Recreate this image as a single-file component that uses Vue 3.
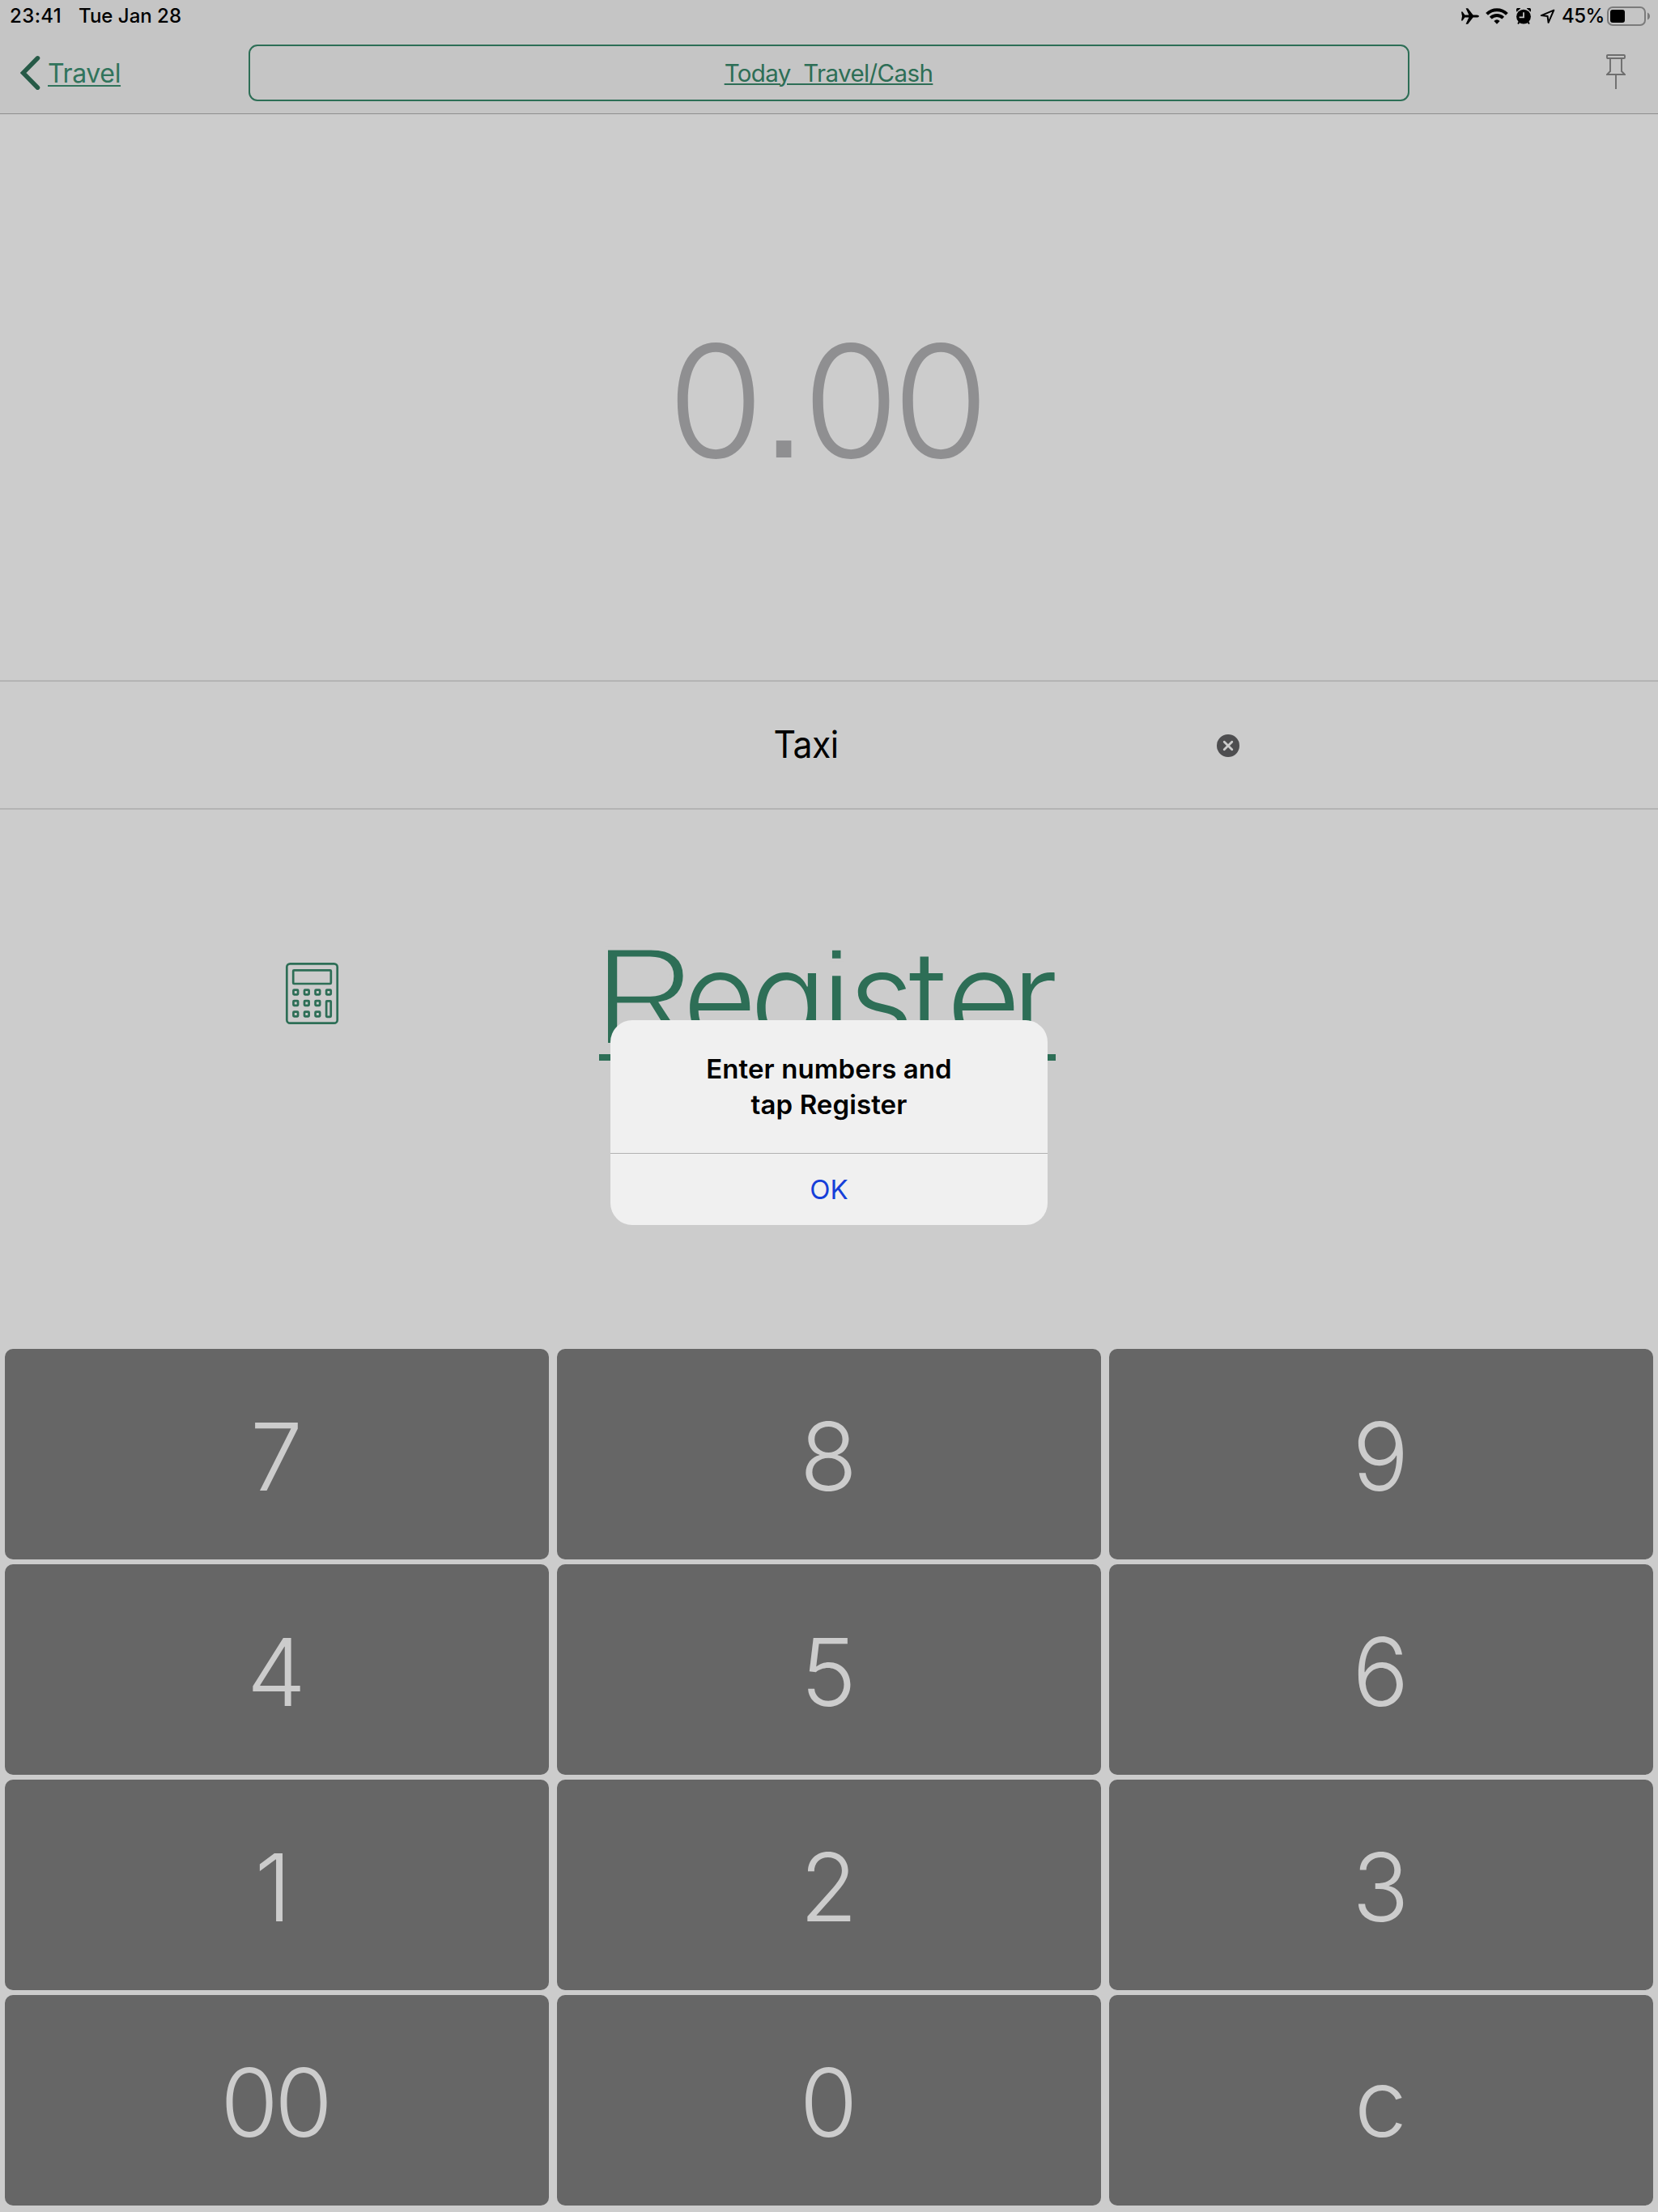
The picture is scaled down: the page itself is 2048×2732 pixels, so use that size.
<script setup>
const keys = ['7', '8', '9', '4', '5', '6', '1', '2', '3', '00', '0', 'c']
</script>

<template>
  <div class="screen">
    <header class="header">
      <div class="status">
        <span class="time">23:41</span>
        <span class="date">Tue Jan 28</span>
        <div class="indicators">
          <svg class="plane" width="22" height="20" viewBox="0 0 22 20">
            <path d="M0 4.6h1.6L4.4 8.4h5L5.6.3h2.6l6.4 8.1h4.6c1.5 0 2.8.8 2.8 1.6s-1.3 1.6-2.8 1.6h-4.6l-6.4 8.1H5.6l3.8-8.1h-5l-2.8 3.8H0L1 10z" />
          </svg>
          <svg class="wifi" width="28" height="20" viewBox="0 0 28 20">
            <path d="M1.6 7.4a17.8 17.8 0 0 1 24.8 0" class="arc" />
            <path d="M6.3 12.1a11.2 11.2 0 0 1 15.4 0" class="arc" />
            <path d="M10.4 15.9a5.4 5.4 0 0 1 7.2 0L14 19.8z" />
          </svg>
          <svg class="alarm" width="18" height="20" viewBox="0 0 18 20">
            <circle cx="9" cy="10.6" r="8.9" />
            <path d="M.3 4.6A3.2 3.2 0 0 1 5.2.5zM17.7 4.6A3.2 3.2 0 0 0 12.8.5zM2.8 16.5l1.6 1.4-1.7 2-1.4-1zM15.2 16.5l-1.6 1.4 1.7 2 1.4-1z" />
            <path d="M9 5.3v6H3.6" class="hands" />
          </svg>
          <svg class="arrow" width="19" height="19" viewBox="0 0 19 19">
            <path d="M17.3 1.6L1.8 8.1l7.8.9 1 7.8z" />
          </svg>
          <span class="percent">45%</span>
          <svg class="battery" width="54" height="24" viewBox="0 0 54 24">
            <rect x="1" y="1" width="46" height="22" rx="6" class="shell" />
            <rect x="4" y="4" width="18" height="16" rx="3" />
            <path d="M50 7.5c1.8.7 3 2.4 3 4.5s-1.2 3.8-3 4.5z" class="cap" />
          </svg>
        </div>
      </div>
      <nav class="nav">
        <a class="back">
          <svg width="26" height="44" viewBox="0 0 26 44">
            <path d="M21.5 3.8L3.5 22l18 18.2" />
          </svg>
          <span>Travel</span>
        </a>
        <button class="context"><span>Today&nbsp; Travel/Cash</span></button>
        <div class="pin">
          <svg width="24" height="44" viewBox="0 0 24 44">
            <path d="M2 1h20q1 0 1 1v2q0 1-1 1H2q-1 0-1-1V2q0-1 1-1zM5 5v16L1 25h22l-4-4V5M12 25v18" />
          </svg>
        </div>
      </nav>
    </header>

    <section class="display">
      <svg width="2048" height="699" viewBox="0 141 2048 699">
        <text class="amount" x="824.5 941 991.5 1102.5" y="565">0<tspan class="point">.</tspan>00</text>
      </svg>
    </section>

    <section class="note">
      <span class="note-text">Taxi</span>
      <svg class="clear" width="28" height="28" viewBox="0 0 28 28">
        <circle cx="14" cy="14" r="14" />
        <path d="M9.2 9.2l9.6 9.6M18.8 9.2l-9.6 9.6" />
      </svg>
    </section>

    <section class="action">
      <svg width="2048" height="666" viewBox="0 1000 2048 666">
        <g class="calculator">
          <rect x="354.3" y="1190.3" width="62.4" height="73.4" rx="4" />
          <rect x="362.2" y="1198.3" width="46.6" height="16.7" rx="1" />
          <template v-for="row in 3" :key="row">
            <template v-for="col in 4" :key="col">
              <rect
                v-if="row === 1 || col < 4"
                :x="348.9 + col * 13.55"
                :y="1209.2 + row * 13.5"
                width="5.6"
                height="5.6"
                rx=".8"
              />
            </template>
          </template>
          <rect x="403.1" y="1236.3" width="5.6" height="19.6" rx=".8" />
        </g>
        <text
          class="register"
          x="734.5 843.5 926.5 1015.5 1048 1122.5 1169.5 1250"
          y="1290.4 1288 1288 1288 1288 1288 1288 1288"
        ><tspan class="cap-r">R</tspan>eg<tspan class="dot-i">i</tspan>ster</text>
        <rect class="register-line" x="740" y="1302" width="564" height="8" />
      </svg>
    </section>

    <main class="keypad">
      <button v-for="k in keys" :key="k" class="key" :class="{ one: k === '1' }"><span>{{ k }}</span></button>
    </main>

    <div class="overlay">
      <div class="dialog">
        <p class="message">Enter numbers and<br />tap Register</p>
        <button class="ok">OK</button>
      </div>
    </div>
  </div>
</template>

<style>
body {
  background: #ccc;
}
</style>

<style scoped>
.screen {
  position: relative;
  width: 2048px;
  height: 2732px;
  display: flex;
  flex-direction: column;
  overflow: hidden;
  background: #ccc;
  font-family: Inter, "Liberation Sans", sans-serif;
  color: #000;
}
svg {
  display: block;
  flex: none;
}
button {
  appearance: none;
  border: 0;
  padding: 0;
  margin: 0;
  background: none;
  font: inherit;
}
.header {
  box-sizing: border-box;
  height: 141px;
  flex: none;
  background: #c5c5c5;
  border-bottom: 1px solid #8e8e8e;
}
.status {
  box-sizing: border-box;
  height: 40px;
  padding: 0 9px 1px 12px;
  display: flex;
  align-items: center;
  font-size: 24px;
  font-weight: 500;
  line-height: 39px;
}
.time {
  width: 85px;
  letter-spacing: 0.4px;
}
.indicators {
  margin-left: auto;
  display: flex;
  align-items: center;
}
.wifi {
  margin-left: 8px;
}
.wifi .arc {
  fill: none;
  stroke: #000;
  stroke-width: 4;
}
.alarm {
  margin-left: 10px;
}
.alarm .hands {
  fill: none;
  stroke: #c5c5c5;
  stroke-width: 1.8;
}
.arrow {
  margin: 2px 0 0 11px;
  fill: none;
  stroke: #000;
  stroke-width: 2;
  stroke-linejoin: round;
}
.percent {
  width: 56px;
  margin-left: 8px;
  letter-spacing: -0.5px;
}
.battery .shell {
  fill: none;
  stroke: #7b7b7b;
  stroke-width: 2;
}
.battery .cap {
  fill: #7b7b7b;
}
.nav {
  height: 100px;
  display: grid;
  grid-template-columns: 307px 1434px 307px;
  align-items: center;
}
.back {
  display: flex;
  align-items: center;
  padding-left: 25px;
  font-size: 32px;
  line-height: 40px;
  letter-spacing: -0.35px;
  color: #31745c;
}
.back svg path {
  fill: none;
  stroke: #265a47;
  stroke-width: 5.5;
  stroke-linecap: round;
  stroke-linejoin: miter;
}
.back span {
  margin-left: 8px;
  padding-top: 1px;
  text-decoration: underline;
  text-decoration-thickness: 2px;
  text-underline-offset: 3px;
}
.context {
  box-sizing: border-box;
  height: 70px;
  padding-right: 1px;
  border: 2px solid #2d6e56;
  border-radius: 11px;
  color: #2d6e56;
  font-size: 29.5px;
  line-height: 66px;
  letter-spacing: -0.6px;
}
.context span {
  text-decoration: underline;
  text-decoration-thickness: 2px;
  text-underline-offset: 2px;
}
.pin {
  display: flex;
  justify-content: flex-end;
  padding: 0 40px 3px 0;
}
.pin path {
  fill: none;
  stroke: #6e6e6e;
  stroke-width: 1.9;
}
.display {
  height: 699px;
  flex: none;
}
.amount {
  font-size: 193px;
  font-weight: 300;
  fill: #8f8f91;
}
.point {
  font-family: "Liberation Sans", Arial, sans-serif;
  font-size: 195px;
  font-weight: 400;
}
.note {
  height: 156px;
  flex: none;
  border-top: 2px solid #b4b4b4;
  border-bottom: 2px solid #b4b4b4;
  display: grid;
  grid-template-columns: 1503px 1fr;
  align-items: center;
}
.note-text {
  font-size: 46px;
  line-height: 60px;
  letter-spacing: -0.6px;
  padding-left: 955.5px;
  padding-bottom: 2px;
  transform: scaleX(0.93);
  transform-origin: 955.5px 50%;
}
.clear {
  margin-top: 2px;
  fill: #4e4e50;
}
.clear path {
  stroke: #ccc;
  stroke-width: 2.8;
  stroke-linecap: round;
}
.action {
  height: 666px;
  flex: none;
}
.calculator {
  fill: none;
  stroke: #2d6e56;
  stroke-width: 2.7;
}
.register {
  font-size: 157px;
  font-weight: 300;
  fill: #2d6e56;
}
.cap-r,
.dot-i {
  font-family: "Liberation Sans", Arial, sans-serif;
  font-weight: 400;
  stroke: #ccc;
}
.cap-r {
  font-size: 172px;
  stroke-width: 4.8;
}
.dot-i {
  font-size: 160px;
  stroke-width: 3.5;
}
.register-line {
  fill: #2d6e56;
}
.keypad {
  flex: 1;
  padding: 0 6px 8px;
  display: grid;
  grid-template-columns: repeat(3, 1fr);
  grid-template-rows: repeat(4, 260px);
  gap: 6px 10px;
}
.key {
  display: flex;
  align-items: center;
  justify-content: center;
  border-radius: 10px;
  background: #666;
  color: #ccc;
  font-size: 116px;
  font-weight: 300;
  line-height: 200px;
  letter-spacing: -4.6px;
}
.key span {
  margin-right: 5.6px;
  padding-top: 6px;
}
.key.one span {
  margin-right: 14px;
}
.overlay {
  position: absolute;
  inset: 0;
  display: flex;
  justify-content: center;
  align-items: flex-start;
  padding-top: 1260px;
}
.dialog {
  width: 540px;
  height: 253px;
  border-radius: 27px;
  background: #f0f0f0;
  display: flex;
  flex-direction: column;
  overflow: hidden;
}
.message {
  box-sizing: border-box;
  height: 164px;
  margin: 0;
  padding-top: 38px;
  font-size: 33px;
  font-weight: 600;
  line-height: 44px;
  letter-spacing: 0.1px;
  text-align: center;
}
.ok {
  flex: 1;
  border-top: 1px solid #b1b1b1;
  font-size: 33px;
  line-height: 88px;
  color: #163fd9;
}
</style>
